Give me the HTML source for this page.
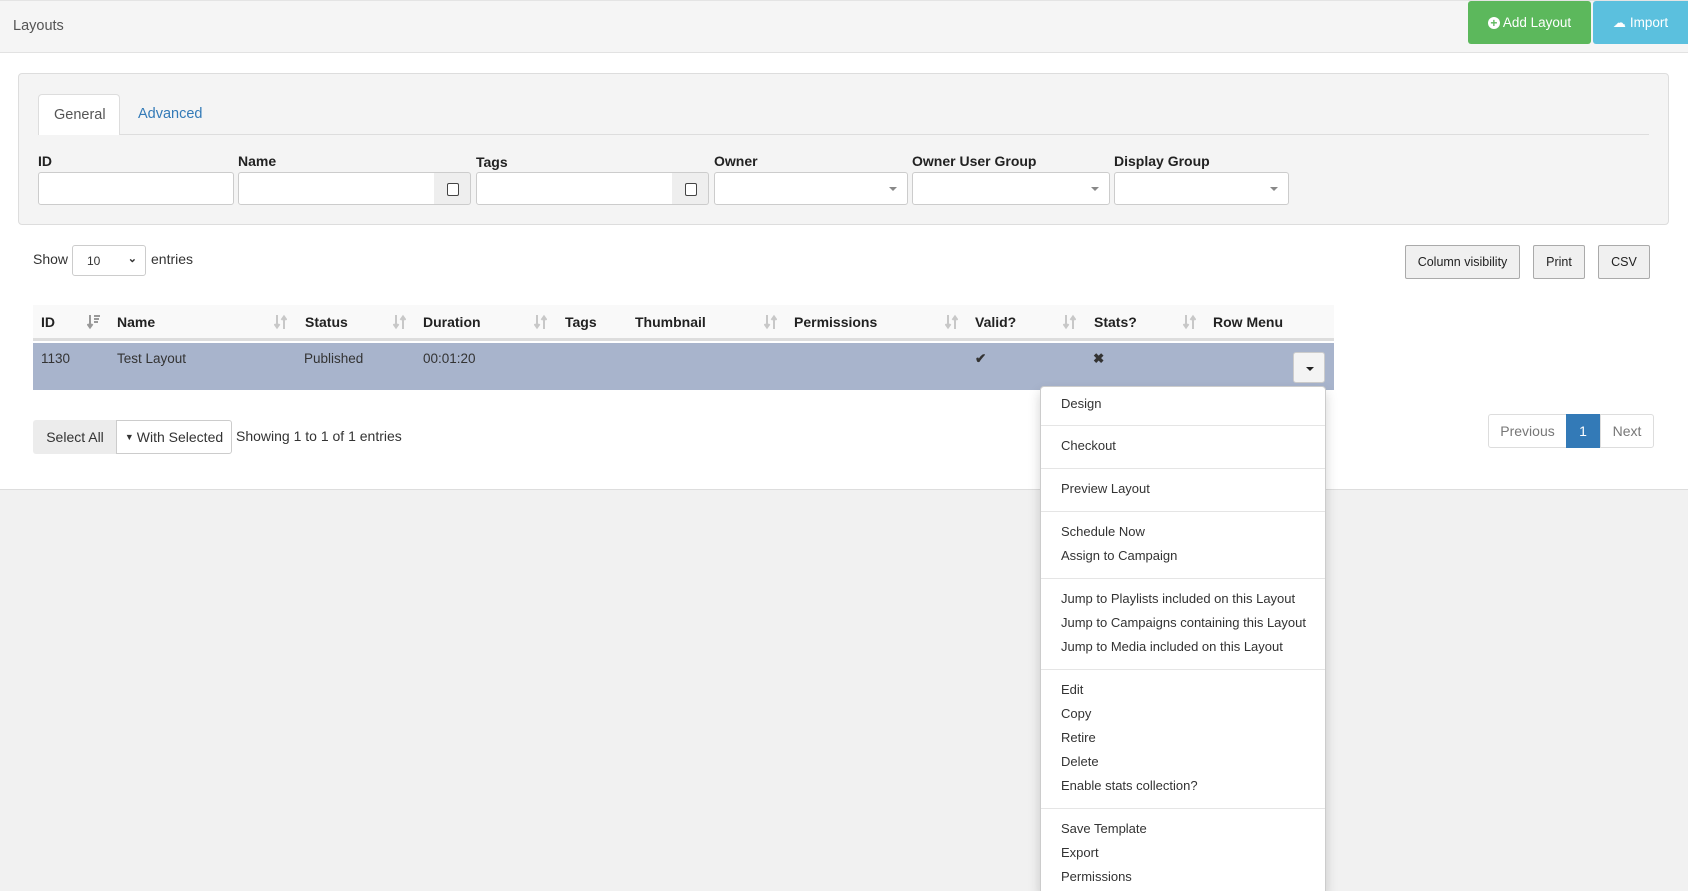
<!DOCTYPE html>
<html style="width:1688px;height:891px;overflow:hidden"><head><meta charset="utf-8"><style>
*{box-sizing:border-box;margin:0;padding:0}
body{width:1688px;height:891px;overflow:hidden;background:#f1f1f1;font-family:"Liberation Sans",sans-serif;color:#333;position:relative;font-size:14px}
.a{position:absolute}
.hdr{left:0;top:0;width:1688px;height:53px;background:#f5f5f5;border-top:1px solid #e4e4e4;border-bottom:1px solid #e2e2e2}
.main{left:0;top:53px;width:1688px;height:437px;background:#fff;border-bottom:1px solid #ddd}
.btn{position:absolute;display:flex;align-items:center;justify-content:center;font-size:13.5px}
.lbl{font-weight:bold;font-size:14px;color:#222}
.inp{position:absolute;background:#fff;border:1px solid #ccc;border-radius:3px;height:33px;top:172px}
.add{position:absolute;top:172px;height:33px;background:#eee;border:1px solid #ccc;border-left:none;border-radius:0 3px 3px 0}
.add i{position:absolute;left:13px;top:10px;width:12px;height:13px;border:1px solid #444;border-radius:2px;background:#fff}
.car{position:absolute;right:10px;top:14px;border-left:4px solid transparent;border-right:4px solid transparent;border-top:4px solid #888}
.th{position:absolute;top:314px;font-weight:bold;font-size:14px;color:#222}
.so{position:absolute;top:314px;width:13px;height:16px}
.td{position:absolute;top:351px;font-size:13.5px;color:#333}
.menu{left:1040px;top:386px;width:286px;height:506px;background:#fff;border:1px solid #ccc;border-bottom:none;border-radius:4px 4px 0 0;box-shadow:0 6px 12px rgba(0,0,0,.18)}
.mi{position:absolute;left:20px;font-size:13px;color:#333;white-space:nowrap}
.dv{position:absolute;left:0;width:284px;height:1px;background:#e5e5e5}
.tb{background:#f0f0f0;border:1px solid #aaa;border-radius:2px;font-size:12.5px;color:#222}
</style></head><body>
<svg width="0" height="0" style="position:absolute"><defs>
<g id="s"><path d="M3 1v12M0.5 10l2.5 3.5 2.5-3.5M10 15V3M7.5 6l2.5-3.5 2.5 3.5" stroke="#c8c8c8" stroke-width="2" fill="none"/></g>
</defs></svg>
<div class="a hdr"></div>
<div class="a" style="left:13px;top:18px;font-size:14.5px;color:#555">Layouts</div>
<div class="btn" style="left:1468px;top:1px;width:123px;height:43px;background:#5cb85c;color:#fff;border-radius:3px"><span style="display:inline-block;width:12px;height:12px;border-radius:50%;background:#fff;color:#5cb85c;font-size:12px;line-height:12px;text-align:center;font-weight:bold;margin-right:3px">+</span>Add Layout</div>
<div class="btn" style="left:1593px;top:1px;width:95px;height:43px;background:#5bc0de;color:#fff;border-radius:3px 0 0 3px"><span style="font-size:13px;margin-right:4px">☁</span>Import</div>
<div class="a main"></div>
<div class="a" style="left:18px;top:73px;width:1651px;height:152px;background:#f4f4f4;border:1px solid #ddd;border-radius:4px"></div>
<div class="a" style="left:38px;top:134px;width:1611px;height:1px;background:#ddd"></div>
<div class="a" style="left:38px;top:94px;width:82px;height:41px;background:#fff;border:1px solid #ddd;border-bottom:none;border-radius:4px 4px 0 0;font-size:14.5px;color:#555;padding:12px 0 0 15px">General</div>
<div class="a" style="left:138px;top:106px;font-size:14.5px;color:#337ab7">Advanced</div>
<div class="a lbl" style="left:38px;top:153px">ID</div>
<div class="a lbl" style="left:238px;top:153px">Name</div>
<div class="a lbl" style="left:476px;top:154px">Tags</div>
<div class="a lbl" style="left:714px;top:153px">Owner</div>
<div class="a lbl" style="left:912px;top:153px">Owner User Group</div>
<div class="a lbl" style="left:1114px;top:153px">Display Group</div>
<div class="inp" style="left:38px;width:196px"></div>
<div class="inp" style="left:238px;width:197px;border-radius:3px 0 0 3px"></div>
<div class="add" style="left:434px;width:37px"><i></i></div>
<div class="inp" style="left:476px;width:197px;border-radius:3px 0 0 3px"></div>
<div class="add" style="left:672px;width:37px"><i></i></div>
<div class="inp" style="left:714px;width:194px"><span class="car"></span></div>
<div class="inp" style="left:912px;width:198px"><span class="car"></span></div>
<div class="inp" style="left:1114px;width:175px"><span class="car"></span></div>
<div class="a" style="left:33px;top:251px;font-size:14px">Show</div>
<div class="a" style="left:72px;top:245px;width:74px;height:31px;border:1px solid #ccc;border-radius:3px;background:#fff;font-size:12px;padding:8px 0 0 14px">10<span style="position:absolute;right:8px;top:6px;font-size:11px;font-weight:bold">⌄</span></div>
<div class="a" style="left:151px;top:251px;font-size:14px">entries</div>
<div class="btn tb" style="left:1405px;top:245px;width:115px;height:34px">Column visibility</div>
<div class="btn tb" style="left:1533px;top:245px;width:52px;height:34px">Print</div>
<div class="btn tb" style="left:1598px;top:245px;width:52px;height:34px">CSV</div>
<div class="a" style="left:33px;top:305px;width:1301px;height:36px;background:#f9f9f9;border-bottom:3px solid #ddd"></div>
<div class="a" style="left:33px;top:343px;width:1301px;height:47px;background:#a8b4cc"></div>
<div class="th" style="left:41px">ID</div>
<svg class="so" style="left:87px" viewBox="0 0 13 16"><path d="M3 1v12M0.5 10l2.5 3.5 2.5-3.5M7 2h6M7 5h5M7 8h4" stroke="#999" stroke-width="2" fill="none"/></svg>
<div class="th" style="left:117px">Name</div><svg class="so" style="left:274px" viewBox="0 0 13 16"><use href="#s"/></svg>
<div class="th" style="left:305px">Status</div><svg class="so" style="left:393px" viewBox="0 0 13 16"><use href="#s"/></svg>
<div class="th" style="left:423px">Duration</div><svg class="so" style="left:534px" viewBox="0 0 13 16"><use href="#s"/></svg>
<div class="th" style="left:565px">Tags</div>
<div class="th" style="left:635px">Thumbnail</div><svg class="so" style="left:764px" viewBox="0 0 13 16"><use href="#s"/></svg>
<div class="th" style="left:794px">Permissions</div><svg class="so" style="left:945px" viewBox="0 0 13 16"><use href="#s"/></svg>
<div class="th" style="left:975px">Valid?</div><svg class="so" style="left:1063px" viewBox="0 0 13 16"><use href="#s"/></svg>
<div class="th" style="left:1094px">Stats?</div><svg class="so" style="left:1183px" viewBox="0 0 13 16"><use href="#s"/></svg>
<div class="th" style="left:1213px">Row Menu</div>
<div class="td" style="left:41px">1130</div>
<div class="td" style="left:117px">Test Layout</div>
<div class="td" style="left:304px">Published</div>
<div class="td" style="left:423px">00:01:20</div>
<div class="td" style="left:975px;font-weight:bold">✔</div>
<div class="td" style="left:1093px;font-weight:bold">✖</div>
<div class="a" style="left:1293px;top:352px;width:32px;height:31px;background:#f4f4f4;border:1px solid #ccc;border-radius:3px"><span style="position:absolute;left:12px;top:14px;border-left:4px solid transparent;border-right:4px solid transparent;border-top:4px solid #222"></span></div>
<div class="btn" style="left:33px;top:420px;width:84px;height:34px;background:#ececec;border-radius:3px 0 0 3px;font-size:14px">Select All</div>
<div class="btn" style="left:116px;top:420px;width:116px;height:34px;background:#fff;border:1px solid #ccc;border-radius:0 3px 3px 0;font-size:14px"><span style="font-size:9px;margin-right:3px">▼</span>With Selected</div>
<div class="a" style="left:236px;top:428px;font-size:14px">Showing 1 to 1 of 1 entries</div>
<div class="btn" style="left:1488px;top:414px;width:79px;height:34px;border:1px solid #ddd;border-radius:3px 0 0 3px;color:#777;font-size:14px;background:#fff">Previous</div>
<div class="btn" style="left:1566px;top:414px;width:34px;height:34px;background:#337ab7;color:#fff;font-size:14px">1</div>
<div class="btn" style="left:1600px;top:414px;width:54px;height:34px;border:1px solid #ddd;border-radius:0 3px 3px 0;color:#777;font-size:14px;background:#fff">Next</div>
<div class="a menu">
<div class="mi" style="top:9px">Design</div><div class="dv" style="top:38px"></div>
<div class="mi" style="top:51px">Checkout</div><div class="dv" style="top:81px"></div>
<div class="mi" style="top:94px">Preview Layout</div><div class="dv" style="top:124px"></div>
<div class="mi" style="top:137px">Schedule Now</div>
<div class="mi" style="top:161px">Assign to Campaign</div><div class="dv" style="top:191px"></div>
<div class="mi" style="top:204px">Jump to Playlists included on this Layout</div>
<div class="mi" style="top:228px">Jump to Campaigns containing this Layout</div>
<div class="mi" style="top:252px">Jump to Media included on this Layout</div><div class="dv" style="top:282px"></div>
<div class="mi" style="top:295px">Edit</div>
<div class="mi" style="top:319px">Copy</div>
<div class="mi" style="top:343px">Retire</div>
<div class="mi" style="top:367px">Delete</div>
<div class="mi" style="top:391px">Enable stats collection?</div><div class="dv" style="top:421px"></div>
<div class="mi" style="top:434px">Save Template</div>
<div class="mi" style="top:458px">Export</div>
<div class="mi" style="top:482px">Permissions</div>
</div>
</body></html>
